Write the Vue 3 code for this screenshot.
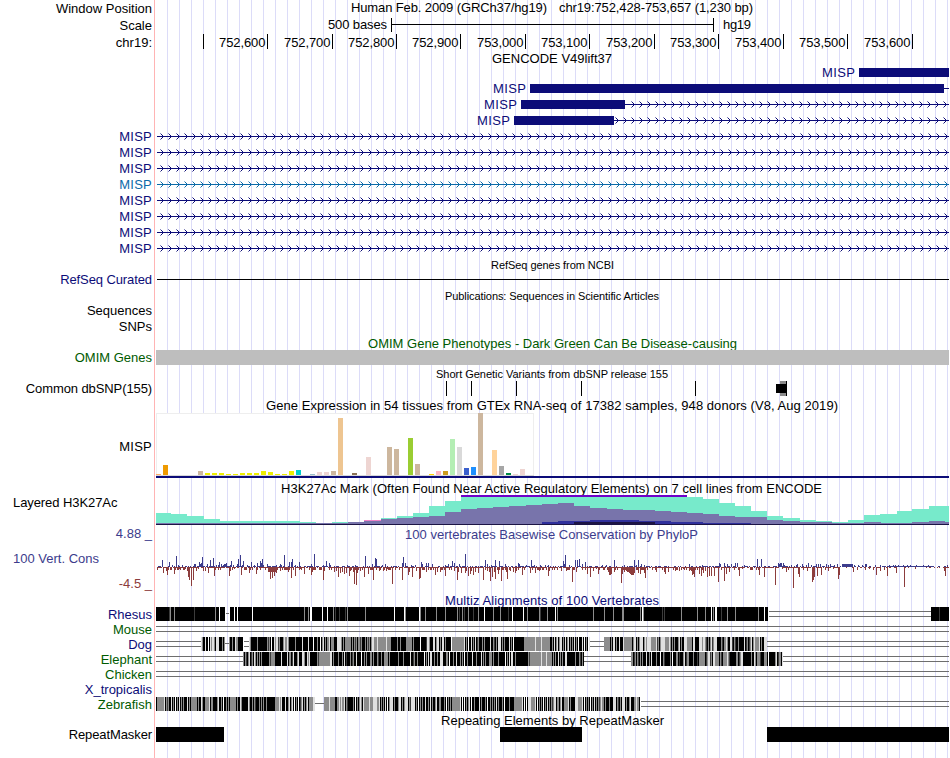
<template>
  <div class="browser">
    <div v-for="band in bands" :key="band.y" class="band" :style="{ height: band.h + 'px' }">
      <div :class="['label', band.kind, band.tone]">
        <span v-for="text in band.labels" :key="text" :class="{ low: text.startsWith('-') }">{{ text }}</span>
      </div>
      <svg class="track" width="796" :height="band.h" :viewBox="`154 ${band.y} 796 ${band.h}`">
        <rect
            v-for="(r, i) in band.rects"
            :key="i"
            :x="r[0]" :y="r[1]" :width="r[2]" :height="r[3]" :fill="r[4]"
        />
        <path v-for="(p, i) in band.paths" :key="'p' + i" :d="p.d" :fill="p.fill || 'none'" :stroke="p.stroke || 'none'" :class="{ arrows: p.stroke }" />
        <text
            v-for="(t, i) in band.texts"
            :key="'t' + i"
            :x="t.x" :y="t.y" :textLength="t.w"
            :class="[t.tone, { small: t.small }]"
        >{{ t.text }}</text>
      </svg>
    </div>
  </div>
</template>

<script setup>
const NAVY = '#0c0c78';
const BLACK = '#000';
const GRAY = '#8c8c8c';
const LINE = '#6e6e6e';
const END = 949;

const text = (value, x, w, y, tone = '', small = false) => ({ text: value, x, w, y, tone, small });
const title = (y, h, t) => ({ y, h, texts: [t] });

// Scale and ruler
const ticks = [203, 267, 332, 396, 460, 525, 589, 654, 718, 783, 847, 912];
const tickNames = ['', '752,600', '752,700', '752,800', '752,900', '753,000', '753,100', '753,200', '753,300', '753,400', '753,500', '753,600'];

// Introns with direction arrows
const arrows = (tip, y, stroke) => {
  let d = '';
  for (let x = tip; x < END; x += 8) {
    d += `M${x - 2.5} ${y - 2.5}L${x + 0.5} ${y + 0.5}L${x - 2.5} ${y + 3.5}`;
  }
  return { d, stroke };
};

const partialGenes = [
  { y: 64, box: [859, 949], name: 822 },
  { y: 80, box: [530, 944], name: 493 },
  { y: 96, box: [521, 625], name: 484, tip: 634 },
  { y: 112, box: [514, 614], name: 477, tip: 618 },
].map(g => ({
  y: g.y,
  h: 16,
  rects: [[g.box[0], g.y + 4, g.box[1] - g.box[0], 9, NAVY], [g.box[1], g.y + 8, END - g.box[1], 1, NAVY]],
  paths: g.tip ? [arrows(g.tip, g.y + 8, NAVY)] : [],
  texts: [text('MISP', g.name, 33, g.y + 13, 'navy')],
}));

const fullGenes = Array.from({ length: 8 }, (_, i) => {
  const y = 128 + i * 16;
  const color = i === 3 ? '#0b6aa8' : NAVY;
  return {
    y,
    h: 16,
    labels: ['MISP'],
    kind: 'wide',
    tone: i === 3 ? 'azure' : 'navy',
    rects: [[157, y + 8, END - 157, 1, color]],
    paths: [arrows(163, y + 8, color)],
  };
});

// Tissue expression: x, height, color
const tissues = [
  [156, 1, '#ffaa66'], [163, 10, '#ee9a00'], [198, 4, '#cdb79e'],
  [205, 2, '#eeee00'], [212, 2, '#eeee00'], [219, 2, '#eeee00'], [226, 1, '#eeee00'], [233, 1, '#eeee00'],
  [240, 2, '#eeee00'], [247, 2, '#eeee00'], [254, 2, '#eeee00'], [261, 4, '#eeee00'], [268, 3, '#eeee00'],
  [275, 1, '#eeee00'], [282, 1, '#eeee00'], [289, 4, '#eeee00'], [296, 5, '#00cdcd'], [310, 1, '#9ac0cd'],
  [317, 3, '#eed5d2'], [324, 3, '#eed5d2'], [331, 4, '#cdb79e'], [338, 57, '#eec591'], [352, 2, '#8b7355'],
  [366, 18, '#eed5d2'], [387, 28, '#cdb79e'], [394, 26, '#cdb79e'], [408, 37, '#9acd32'], [415, 11, '#cdb79e'],
  [429, 1, '#ffd700'], [436, 4, '#ffb6c1'], [443, 4, '#cd9b1d'], [450, 36, '#b4eeb4'], [457, 28, '#d9d9d9'],
  [464, 7, '#3a5fcd'], [471, 8, '#1e90ff'], [478, 62, '#cdb79e'], [492, 25, '#ffd39b'], [499, 9, '#a6a6a6'],
  [506, 2, '#008b45'], [513, 1, '#eed5d2'], [520, 6, '#eed5d2'],
];

// Signal steps: start x, top y
const mint = [
  [156, 513], [171, 514], [187, 516], [204, 519], [220, 521], [300, 522], [316, 523], [332, 522], [364, 521], [381, 518],
  [397, 516], [413, 513], [429, 506], [445, 501], [461, 497], [703, 499], [719, 503], [735, 506], [751, 511],
  [767, 516], [783, 518], [800, 520], [816, 521], [832, 521.5], [848, 520], [864, 515], [880, 514], [897, 511],
  [912, 509], [929, 506],
];
const violet = [
  [156, 523], [348, 522], [364, 521], [381, 519], [397, 518], [413, 517], [429, 516], [445, 512], [461, 509], [477, 508],
  [493, 507], [509, 506], [526, 505], [542, 504], [558, 503], [574, 506], [590, 508], [607, 509], [623, 510],
  [655, 511], [671, 512], [687, 513], [703, 514], [719, 516], [735, 517], [767, 520], [783, 521], [800, 522],
  [832, 523], [864, 522], [881, 523], [912, 522], [929, 521], [945, 522],
];
const indigo = [[156, 524], [542, 522], [558, 521], [590, 520], [639, 521], [671, 522], [703, 523], [751, 524]];
const steps = (list, base) => {
  let d = `M${list[0][0]} ${base}`;
  list.forEach(([x, y], i) => {
    d += `V${y}H${i + 1 < list.length ? list[i + 1][0] : END}`;
  });
  return d + `V${base}Z`;
};

// Conservation scores: x,height pairs
const pairs = str => str.split(' ').map(p => p.split(',').map(Number));
const gains = pairs('162,7 169,5 172,2 176,11 178,2 182,2 188,1 194,3 195,3 199,5 200,3 201,4 202,10 207,3 210,7 213,9 216,2 218,2 219,5 221,3 223,2 224,3 225,3 226,4 230,2 231,6 233,2 237,3 238,8 240,12 242,2 243,6 247,2 251,5 254,2 257,4 260,6 261,4 262,8 263,2 267,3 276,2 280,3 281,2 284,12 289,5 291,5 292,8 295,2 299,5 304,1 311,3 314,13 317,1 323,2 326,6 329,4 330,2 347,2 355,2 365,11 367,1 372,3 375,9 376,8 382,2 385,3 402,4 403,10 405,4 411,2 415,2 421,5 422,3 426,4 428,4 432,3 445,2 448,3 452,6 454,4 459,3 465,13 470,1 485,7 487,3 491,2 495,7 499,6 505,3 518,4 519,3 526,2 531,7 534,2 540,2 545,2 548,2 555,1 563,6 564,3 565,12 569,2 575,7 577,7 579,8 582,3 585,5 602,2 606,2 614,7 624,2 634,7 636,2 638,7 641,3 644,2 655,1 664,1 689,3 702,2 713,1 719,4 720,3 724,4 727,3 731,3 735,4 737,4 744,2 757,8 761,8 778,4 779,3 780,4 781,4 783,4 784,2 791,2 796,2 797,3 802,3 806,2 808,4 811,2 816,3 818,3 820,3 823,1 826,3 828,2 830,3 834,2 837,3 854,2 858,2 862,2 865,3 866,3 870,1 875,2 880,2 889,2 893,2 895,2 898,2 903,2 907,2 910,2 916,2 923,2 928,2 939,1 947,2');
const losses = pairs('157,3 163,6 166,4 167,8 168,3 174,7 177,3 179,2 183,3 185,2 187,4 188,10 189,13 191,19 193,13 196,4 198,2 203,4 205,4 208,6 214,9 215,3 229,9 230,4 234,2 241,8 244,3 249,6 256,7 268,5 269,5 270,12 271,5 272,11 273,5 274,9 275,5 276,6 280,4 284,3 288,5 291,11 295,9 300,2 304,7 309,3 311,8 312,5 314,3 323,13 324,4 331,3 334,5 336,4 338,10 340,6 342,5 344,7 346,6 349,9 350,4 353,5 354,17 356,18 357,6 360,4 364,10 368,7 373,13 376,3 379,4 383,4 386,4 387,2 392,17 395,3 402,13 408,8 409,5 412,10 416,4 419,12 420,11 422,3 426,5 430,3 435,8 437,5 440,5 445,9 451,3 454,4 457,13 458,5 461,6 465,6 466,4 468,9 470,7 471,4 473,8 475,5 478,6 483,13 487,4 489,5 490,14 492,10 494,5 495,12 498,7 501,14 502,3 506,5 507,12 510,4 513,5 515,6 516,4 522,8 524,3 530,6 532,3 535,6 539,4 543,3 548,9 549,4 554,2 561,4 566,4 569,3 572,15 576,5 585,3 587,7 590,10 593,4 596,2 598,7 603,3 608,5 609,8 610,8 611,7 614,5 617,3 621,16 622,7 624,5 626,4 627,5 628,5 629,6 630,7 631,8 632,8 633,8 634,6 638,6 640,7 644,6 645,11 647,3 656,5 664,5 668,5 665,7 675,4 679,4 683,2 689,4 691,4 692,8 693,7 694,10 699,7 701,9 703,6 705,4 707,10 709,9 711,9 714,9 718,15 721,3 724,14 726,7 729,5 734,3 739,9 742,2 748,1 759,8 764,10 775,18 782,2 786,5 788,3 793,21 798,7 799,10 803,3 807,4 812,15 813,13 814,10 817,9 821,8 825,3 828,4 833,2 838,12 839,8 853,5 857,3 865,3 869,2 873,3 876,8 880,4 884,3 887,9 896,6 904,20 915,2 944,4 945,9');

const wiggle = () => {
  const rects = [];
  for (let x = 157; x < END; x++) {
    const n = (x * 37 + (x * x) % 23) % 11;
    if (x > 888 && x < 933) rects.push([x, 566, 1, 1, '#3c3c8c']);
    else if (n < 5) rects.push([x, 566, 1, 1, '#3c3c8c']);
    if (x < 840 ? n > 1 : n > 7) rects.push([x, 567, 1, x < 760 && n > 7 ? 3 : 1, '#8c3c3c']);
  }
  rects.push([842, 564, 11, 3, '#3c3c8c']);
  gains.forEach(([x, h]) => rects.push([x, 567 - h, 1, h, '#3c3c8c']));
  losses.forEach(([x, h]) => rects.push([x, 567, 1, h, '#8c3c3c']));
  return rects;
};

// Alignment density, run-length coded and repeated up to the end of its span:
// k black, d dark, g gray, l light, w white
const shades = { k: BLACK, d: '#3c3c3c', g: GRAY, l: '#e0e0e0', w: '#fff' };
const runs = (from, to, y, str) => {
  const out = [];
  const codes = [...str.matchAll(/([kdglw])(\d*)/g)];
  let x = from;
  for (let i = 0; x < to; i++) {
    const [, shade, n] = codes[i % codes.length];
    const w = Math.min(Number(n || 1), to - x);
    out.push([x, y, w, 14, shades[shade]]);
    x += w;
  }
  return out;
};
const block = (from, to, y) => [from, y, to - from, 14, BLACK];
const double = (from, to, y) => [[from, y + 4, to - from, 1, LINE], [from, y + 9, to - from, 1, LINE]];
const marks = (str, y, shade) => str.split(' ').map(x => [Number(x), y, 1, 14, shades[shade]]);

const rhesus = [
  block(156, 225, 607), [226, 613, 3, 1, LINE], block(229, 768, 607), block(931, END, 607), ...double(769, 931, 607),
  ...marks('169 194 335 339 345 459 464 473 508 540 662 664 721 939', 607, 'd'),
  ...marks('170 174 215 304 308 333 347 365 405 420 425 436 445 457 462 468 478 493 500 527 539 547 557 593 604 613 622 623 640 643 681 697 705 713 727 735 758', 607, 'g'),
  ...marks('219 229 234 237 252 310 311 322 327 394 404 419 484 512 523 555 642 711 715 716 764', 607, 'w'),
];

const dog = [
  ...double(156, 201, 637), [225, 643, 4, 1, LINE], ...double(244, 249, 637), ...double(590, 604, 637), ...double(767, END, 637),
  ...runs(201, 225, 637, 'lgk2lk2wklgl2gkl3k3gkg5'),
  ...runs(229, 244, 637, 'gk2gk2lg2k5w'),
  ...runs(249, 297, 637, 'lgk6gk9gdgkwk2lgl2dgk3glg2'),
  ...runs(297, 345, 637, 'k5lk5lk4wk3gk2wkglkgkg2lkg3k3l4gkg'),
  ...runs(345, 415, 637, 'g6kgkgdgkg2dgk3gkgdgkgl2g3lg8lg4k6gk2gk5'),
  ...runs(415, 452, 637, 'k5wk5dl2gk3l2kgl2kgkl2kg'),
  ...runs(452, 529, 637, 'g12lkgkwk2lkgklkdgk3gkgk5lk2gdkgkl3kgkgk4lkgkwk10'),
  ...runs(529, 550, 637, 'g6lg5lg7'),
  ...runs(550, 590, 637, 'k2gklkglkgl2kgklkglkgkgklkgkwk3lkwkgkwl'),
  ...runs(604, 632, 637, 'g6kgkl2kgk2lk3lg8l'),
  ...runs(632, 680, 637, 'kgl2kgkgl3kglgl4g5ldgkgl4g4lgkgkgk2'),
  ...runs(680, 767, 637, 'kgk2l3g5kl2k4l3gl2gdkgkgldgl3k4gdkg2lgk2l2dkgdk2gk5lkdgkdglkglg4l'),
];

const elephant = [
  ...double(156, 243, 652), ...double(584, 631, 652), ...double(783, END, 652),
  ...runs(243, 262, 652, 'gkgdkglkdgklgkgk'),
  ...runs(262, 321, 652, 'k7gdg4k6lk5lkg2kdlk3glk3l2gk2lgl'),
  ...runs(321, 370, 652, 'g9l2kgk4gk3gklkdk3gkdgk2lk4wk2gkgk4'),
  ...runs(370, 415, 652, 'g2kgk3gdk2gk2g4kgk8gk4gk6lk2d'),
  ...runs(415, 516, 652, 'k2gk6wkgklkl2k2gk2gk2l3k3g2kwk3gk2lk3gkgkwk2gk4lk3gk4lkgkgk3g3kgk2'),
  ...runs(516, 552, 652, 'k12gdg11lg4lg5k'),
  ...runs(552, 584, 652, 'kgkgk2lkgkgk2l2k8gk3gdkgk'),
  ...runs(631, 680, 652, 'g2kdgkgdkgkgk3lk2gklk4gk3wk2gdk5gkwk3'),
  ...runs(680, 782, 652, 'k3glkdg2k4gk3dkg6kdgl2dgkl2g4kgdkg4lgdk6g2kdgl2k8gk2lgkg3dk3g3kwk3'),
  [782, 652, 1, 14, shades.l],
];

const zebrafish = [
  ...double(641, END, 697), [315, 703, 9, 1, LINE],
  ...runs(156, 190, 697, 'kg7lkgdgk2lkgkwkgklkgkgk3l'),
  ...runs(190, 244, 697, 'kg6kgk2lgk2g4lkg2k4glk2gkwk2gkg'),
  ...runs(244, 275, 697, 'k4lgk2gkgdk3gkgkgk2gk5'),
  ...runs(275, 314, 697, 'g4lglk3lk2glkglkwkgkwkdglkgkglk'),
  [314, 697, 1, 14, shades.l],
  ...runs(324, 373, 697, 'g5lg5k2g2lglg2lkgdk5gkwkgkglgkl'),
  ...runs(373, 415, 697, 'l4g2lkgkgklkwkgl3kgk3gl2kgkgl3kgd'),
  ...runs(415, 452, 697, 'kgkwkgkgk2lk2gklkgk2glk2g2k2'),
  ...runs(452, 528, 697, 'g8lkwkwkgkglkwk2gk4lkgk3gkwk2gkgkgklkgk3gkwk4gk4'),
  ...runs(528, 602, 697, 'l3g4lkwkgkgkwkgklkgkgdgl2kg2kglk2g4lkgk4'),
  ...runs(602, 640, 697, 'g2kgk3gk3l3kgdkgkl3kgk2glk3g2l'),
];

const species = [
  { name: 'Rhesus', tone: 'navy', rects: rhesus },
  { name: 'Mouse', tone: 'green', rects: double(156, END, 622) },
  { name: 'Dog', tone: 'navy', rects: dog },
  { name: 'Elephant', tone: 'green', rects: elephant },
  { name: 'Chicken', tone: 'green', rects: double(156, END, 667) },
  { name: 'X_tropicalis', tone: 'navy', rects: [] },
  { name: 'Zebrafish', tone: 'green', rects: zebrafish },
].map((s, i) => ({ y: 607 + i * 15, h: 15, labels: [s.name], tone: s.tone, rects: s.rects }));

const bands = [
  {
    y: 0, h: 17, labels: ['Window Position'],
    texts: [text('Human Feb. 2009 (GRCh37/hg19)', 351, 196, 12), text('chr19:752,428-753,657 (1,230 bp)', 559, 194, 12)],
  },
  {
    y: 17, h: 17, labels: ['Scale'],
    rects: [[391, 18, 1, 14, BLACK], [391, 24, 323, 1, BLACK], [713, 18, 1, 14, BLACK]],
    texts: [text('500 bases', 328, 59, 29), text('hg19', 723, 28, 29)],
  },
  {
    y: 34, h: 16, labels: ['chr19:'],
    rects: ticks.map(x => [x, 34, 1, 15, BLACK]),
    texts: ticks.slice(1).map((x, i) => text(tickNames[i + 1], x - 48, 46.5, 47)),
  },
  title(50, 14, text('GENCODE V49lift37', 492, 120, 63)),
  ...partialGenes,
  ...fullGenes,
  title(256, 15, text('RefSeq genes from NCBI', 491, 123, 269, '', true)),
  { y: 271, h: 16, labels: ['RefSeq Curated'], kind: 'tight', tone: 'navy', rects: [[157, 279, END - 157, 1, BLACK]] },
  title(287, 15, text('Publications: Sequences in Scientific Articles', 445, 214, 300, '', true)),
  { y: 302, h: 16, labels: ['Sequences'] },
  { y: 318, h: 16, labels: ['SNPs'] },
  title(334, 16, text('OMIM Gene Phenotypes - Dark Green Can Be Disease-causing', 368, 369, 348, 'green')),
  { y: 350, h: 15, labels: ['OMIM Genes'], tone: 'green', rects: [[156, 350, END - 156, 15, '#bebebe']] },
  title(365, 16, text('Short Genetic Variants from dbSNP release 155', 436, 232, 378, '', true)),
  {
    y: 381, h: 15, labels: ['Common dbSNP(155)'], kind: 'tight',
    rects: [
      ...[446, 471, 516, 581, 695].map(x => [x, 381, 1, 15, BLACK]),
      [780, 381, 6, 15, GRAY], [776, 384, 10, 9, BLACK], [786, 381, 1, 15, BLACK],
    ],
  },
  title(396, 17, text('Gene Expression in 54 tissues from GTEx RNA-seq of 17382 samples, 948 donors (V8, Aug 2019)', 266, 572, 410)),
  {
    y: 413, h: 66, labels: ['MISP'], kind: 'wide',
    rects: [
      [156, 413, 378, 63, '#eee'], [157, 414, 376, 61, '#fff'], [156, 475, 378, 1, '#d8d8d8'],
      ...tissues.map(([x, h, color]) => [x, 475 - h, 5, h, color]),
      [156, 476, END - 156, 2, NAVY],
    ],
  },
  title(479, 16, text('H3K27Ac Mark (Often Found Near Active Regulatory Elements) on 7 cell lines from ENCODE', 281, 541, 493)),
  {
    y: 495, h: 31, labels: ['Layered H3K27Ac'], kind: 'signal',
    rects: [[461, 495, 226, 2, '#7000c8']],
    paths: [
      { d: steps(mint, 525), fill: '#77eacb' },
      { d: 'M364 520H381V522H364Z', fill: '#ee82c8' },
      { d: steps(violet, 525), fill: '#7874ab' },
      { d: steps(indigo, 525), fill: '#30309c' },
      { d: 'M574 522H655V524H574ZM156 524H949V525H156Z', fill: '#1c1445' },
    ],
  },
  {
    y: 526, h: 67, labels: ['4.88 _', '100 Vert. Cons', '-4.5 _'], kind: 'scores', tone: 'slate',
    rects: wiggle(),
    texts: [text('100 vertebrates Basewise Conservation by PhyloP', 405, 293, 539, 'slate')],
  },
  title(593, 14, text('Multiz Alignments of 100 Vertebrates', 445, 214, 605, 'navy')),
  ...species,
  title(712, 15, text('Repeating Elements by RepeatMasker', 441, 223, 725)),
  {
    y: 727, h: 15, labels: ['RepeatMasker'], kind: 'tight',
    rects: [[156, 727, 68, 15, BLACK], [500, 727, 82, 15, BLACK], [767, 727, 182, 15, BLACK]],
  },
];
</script>

<style>
body {
  margin: 0;
  background: #fff;
}
</style>

<style scoped>
.browser {
  width: 950px;
  height: 758px;
  overflow: hidden;
  font-family: "Liberation Sans", Arial, sans-serif;
  font-size: 13px;
  color: #000;
  background-image:
    linear-gradient(#ffb4b4, #ffb4b4),
    repeating-linear-gradient(90deg, #dcdcf8 0, #dcdcf8 1px, transparent 1px, transparent 12px);
  background-size: 1px 100%, 782px 100%;
  background-position: 154px 0, 167px 0;
  background-repeat: no-repeat;
}

.band {
  display: flex;
}

.label {
  box-sizing: border-box;
  width: 154px;
  padding-right: 2px;
  display: flex;
  flex-direction: column;
  justify-content: center;
  text-align: right;
  line-height: 15px;
  white-space: pre;
}

.label.tight {
  letter-spacing: -0.1px;
}

.label.wide {
  letter-spacing: 0.25px;
}

.label.signal {
  padding-left: 13px;
  padding-bottom: 17px;
  text-align: left;
  letter-spacing: -0.08px;
}

.label.scores {
  justify-content: flex-start;
  gap: 10px;
}

.label.scores span:nth-child(2) {
  padding-left: 13px;
  text-align: left;
}

.track {
  display: block;
  overflow: visible;
  shape-rendering: crispEdges;
}

.arrows {
  shape-rendering: auto;
  stroke-width: 1;
}

.small {
  font-size: 11px;
}

.navy {
  color: #0c0c78;
  fill: #0c0c78;
}

.azure {
  color: #0b6aa8;
  fill: #0b6aa8;
}

.green {
  color: #005a00;
  fill: #005a00;
}

.slate {
  color: #3c3c8c;
  fill: #3c3c8c;
}

.low {
  color: #8c3c3c;
}
</style>
